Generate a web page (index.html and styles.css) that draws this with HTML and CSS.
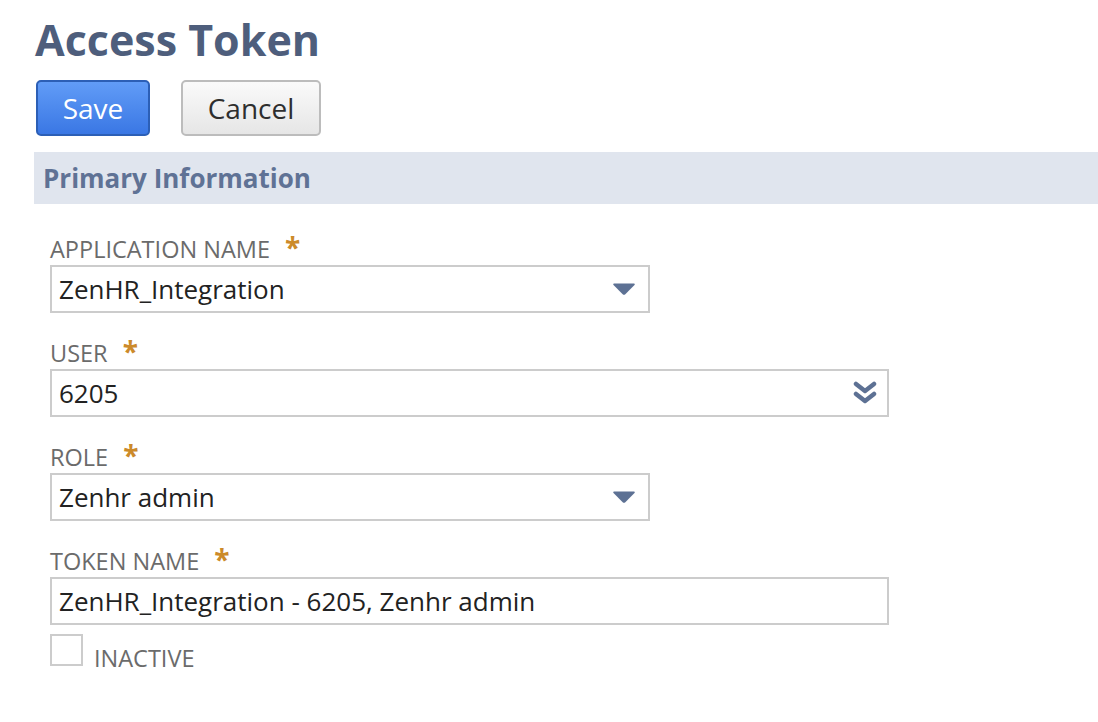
FILE: index.html
```html
<!DOCTYPE html>
<html>
<head>
<meta charset="utf-8">
<link rel="stylesheet" href="styles.css">
</head>
<body>
<div class="page">
  <h1 class="title">Access Token</h1>
  <div class="actions">
    <button class="btn btn-primary">Save</button>
    <button class="btn btn-secondary">Cancel</button>
  </div>
  <div class="section-head">Primary Information</div>
  <div class="form">
    <div class="field">
      <div class="label">APPLICATION NAME <span class="req">*</span></div>
      <div class="input w-short">
        <span class="value">ZenHR_Integration</span>
        <svg class="icon-tri" width="24" height="14" viewBox="0 0 24 14"><path d="M2 1.5 H22 Q23.5 1.5 22.5 3 L13.3 12.2 Q12 13.5 10.7 12.2 L1.5 3 Q0.5 1.5 2 1.5 Z" fill="#5d7194"/></svg>
      </div>
    </div>
    <div class="field">
      <div class="label">USER <span class="req">*</span></div>
      <div class="input w-long">
        <span class="value">6205</span>
        <svg class="icon-dbl" width="24" height="24" viewBox="0 0 24 24"><path d="M3 3 L12 10 L21 3" fill="none" stroke="#5d7194" stroke-width="4.5" stroke-linecap="round" stroke-linejoin="round"/><path d="M3 13 L12 20 L21 13" fill="none" stroke="#5d7194" stroke-width="4.5" stroke-linecap="round" stroke-linejoin="round"/></svg>
      </div>
    </div>
    <div class="field">
      <div class="label">ROLE <span class="req">*</span></div>
      <div class="input w-short">
        <span class="value">Zenhr admin</span>
        <svg class="icon-tri" width="24" height="14" viewBox="0 0 24 14"><path d="M2 1.5 H22 Q23.5 1.5 22.5 3 L13.3 12.2 Q12 13.5 10.7 12.2 L1.5 3 Q0.5 1.5 2 1.5 Z" fill="#5d7194"/></svg>
      </div>
    </div>
    <div class="field">
      <div class="label">TOKEN NAME <span class="req">*</span></div>
      <div class="input w-long">
        <span class="value">ZenHR_Integration - 6205, Zenhr admin</span>
      </div>
    </div>
    <div class="check-row">
      <span class="checkbox"></span>
      <span class="check-label">INACTIVE</span>
    </div>
  </div>
</div>
</body>
</html>
```

FILE: styles.css
```css
html, body {
  margin: 0;
  padding: 0;
  background: #ffffff;
}
body {
  font-family: "Open Sans", "Liberation Sans", sans-serif;
}
.page {
  padding-left: 34px;
  padding-bottom: 40px;
}
.title {
  margin: 0;
  padding-top: 12px;
  font-size: 43px;
  line-height: 56px;
  font-weight: 700;
  color: #4e5e7c;
  padding-left: 1px;
}
.actions {
  display: flex;
  gap: 31px;
  margin-top: 12px;
  padding-left: 2px;
}
.btn {
  font-family: "Open Sans", "Liberation Sans", sans-serif;
  font-size: 28px;
  height: 56px;
  border-radius: 5px;
  padding: 0;
  box-sizing: border-box;
}
.btn-primary {
  width: 114px;
  color: #ffffff;
  background: linear-gradient(#619cf7, #3a77e4);
  border: 2px solid #2c5fb6;
}
.btn-secondary {
  width: 140px;
  color: #2e2e2e;
  background: linear-gradient(#fafafa, #e6e6e6);
  border: 2px solid #bcbcbc;
}
.section-head {
  margin-top: 16px;
  height: 52px;
  background: #e0e5ee;
  color: #5f7295;
  font-weight: 700;
  font-size: 26px;
  line-height: 52px;
  padding-left: 9px;
}
.form {
  padding-left: 16px;
  padding-top: 29px;
}
.field {
  margin-bottom: 24px;
}
.label {
  font-size: 23.5px;
  line-height: 28px;
  color: #6b6b6b;
  height: 28px;
  padding-bottom: 4px;
  white-space: nowrap;
}
.req {
  color: #cc8a2a;
  font-weight: 700;
  margin-left: 9px;
  font-size: 28px;
}
.input {
  box-sizing: border-box;
  height: 48px;
  border: 2px solid #cccccc;
  display: flex;
  align-items: center;
  justify-content: space-between;
  padding: 0 12px 0 7px;
  background: #fff;
}
.w-short { width: 600px; }
.w-long { width: 839px; padding-right: 10px; }
.value {
  font-size: 26px;
  color: #222222;
}
.check-row {
  display: flex;
  align-items: flex-start;
  gap: 11px;
  margin-top: -15px;
}
.checkbox {
  box-sizing: border-box;
  width: 33px;
  height: 32px;
  border: 2px solid #cccccc;
  display: inline-block;
}
.check-label {
  font-size: 23.5px;
  color: #6b6b6b;
  line-height: 28px;
  margin-top: 10px;
}
```
